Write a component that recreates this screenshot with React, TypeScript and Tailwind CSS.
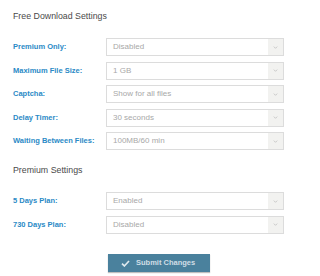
import React from "react";

const free = [
  ["Premium Only:", "Disabled"],
  ["Maximum File Size:", "1 GB"],
  ["Captcha:", "Show for all files"],
  ["Delay Timer:", "30 seconds"],
  ["Waiting Between Files:", "100MB/60 min"],
];
const prem = [
  ["5 Days Plan:", "Enabled"],
  ["730 Days Plan:", "Disabled"],
];

function Row({ label, value }: { label: string; value: string }) {
  return (
    <div className="flex items-center h-[18px]">
      <div className="w-[93px] text-[7.5px] font-bold text-[#2a8ac6] leading-none">{label}</div>
      <div className="w-[178px] h-full border border-[#dcdcdc] bg-white flex items-center">
        <div className="flex-1 pl-[6px] text-[8px] text-[#a8a8a8] leading-none">{value}</div>
        <div className="w-[15px] h-full bg-[#f2f2f0] flex items-center justify-center">
          <svg width="5" height="3" viewBox="0 0 5 3">
            <path d="M0.8 0.6 L2.5 2.3 L4.2 0.6" stroke="#b8b8b8" strokeWidth="0.7" fill="none" />
          </svg>
        </div>
      </div>
    </div>
  );
}

export default function App() {
  return (
    <div
      className="w-[320px] h-[276px] bg-white pl-[13px] pt-[7px]"
      style={{ fontFamily: '"Liberation Sans", Arial, sans-serif' }}
    >
      <div className="h-[20px] flex items-center text-[8.8px] text-[#4a4a4a]">Free Download Settings</div>
      <div className="mt-[11px] flex flex-col gap-[5.5px]">
        {free.map(([l, v]) => (
          <Row key={l} label={l} value={v} />
        ))}
      </div>
      <div className="mt-[11px] h-[20px] flex items-center text-[8.8px] text-[#4a4a4a]">Premium Settings</div>
      <div className="mt-[11px] flex flex-col gap-[5.5px]">
        {prem.map(([l, v]) => (
          <Row key={l} label={l} value={v} />
        ))}
      </div>
      <div className="mt-[20.5px] ml-[95px] w-[102px] h-[18px] bg-[#4a819d] flex items-center pl-[13px] gap-[6px] shadow-[0_1px_1px_rgba(0,0,0,0.25)]">
        <svg width="9" height="7" viewBox="0 0 10 8">
          <path d="M1 4.2 L3.7 6.8 L9 1.2" stroke="#dfe9ee" strokeWidth="1.9" fill="none" />
        </svg>
        <span className="text-[7.5px] font-bold text-[#d0dee6] leading-none">Submit Changes</span>
      </div>
    </div>
  );
}
